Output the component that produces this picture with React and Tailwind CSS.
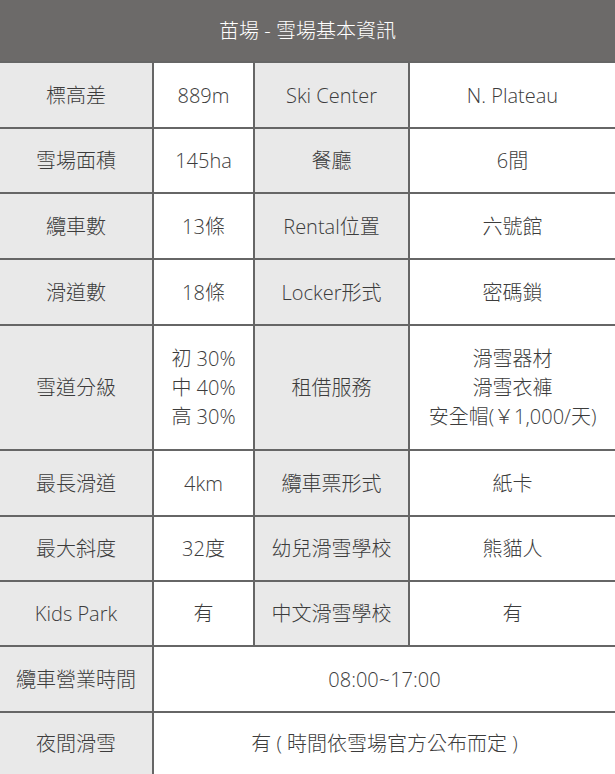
import React from "react";

const font = { fontFamily: '"Open Sans", "Noto Sans CJK TC", sans-serif' };

function L({ children, className = "" }) {
  return (
    <div className={`bg-[#e9e9e9] flex items-center justify-center text-center ${className}`}>
      {children}
    </div>
  );
}
function V({ children, className = "" }) {
  return (
    <div className={`bg-white flex items-center justify-center text-center ${className}`}>
      {children}
    </div>
  );
}

export default function App() {
  return (
    <div
      className="w-[615px] h-[774px] overflow-hidden bg-[#666] grid grid-cols-[152px_99px_153px_1fr] grid-rows-[61px_64px_63px_64px_64px_123px_64px_63px_63px_64px_61px] gap-[2px] text-[20px] font-light text-[#3c3c3c] leading-[29px]"
      style={font}
    >
      <div className="col-span-4 bg-[#6c6a69] text-white flex items-center justify-center">
        苗場 - 雪場基本資訊
      </div>

      <L>標高差</L>
      <V>889m</V>
      <L>Ski Center</L>
      <V>N. Plateau</V>

      <L>雪場面積</L>
      <V>145ha</V>
      <L>餐廳</L>
      <V>6間</V>

      <L>纜車數</L>
      <V>13條</V>
      <L>Rental位置</L>
      <V>六號館</V>

      <L>滑道數</L>
      <V>18條</V>
      <L>Locker形式</L>
      <V>密碼鎖</V>

      <L>雪道分級</L>
      <V>
        <div>
          <div>初 30%</div>
          <div>中 40%</div>
          <div>高 30%</div>
        </div>
      </V>
      <L>租借服務</L>
      <V>
        <div>
          <div>滑雪器材</div>
          <div>滑雪衣褲</div>
          <div>安全帽(￥1,000/天)</div>
        </div>
      </V>

      <L>最長滑道</L>
      <V>4km</V>
      <L>纜車票形式</L>
      <V>紙卡</V>

      <L>最大斜度</L>
      <V>32度</V>
      <L>幼兒滑雪學校</L>
      <V>熊貓人</V>

      <L>Kids Park</L>
      <V>有</V>
      <L>中文滑雪學校</L>
      <V>有</V>

      <L>纜車營業時間</L>
      <V className="col-span-3">08:00~17:00</V>

      <L>夜間滑雪</L>
      <V className="col-span-3 whitespace-pre">有 ( 時間依雪場官方公布而定 )</V>
    </div>
  );
}
